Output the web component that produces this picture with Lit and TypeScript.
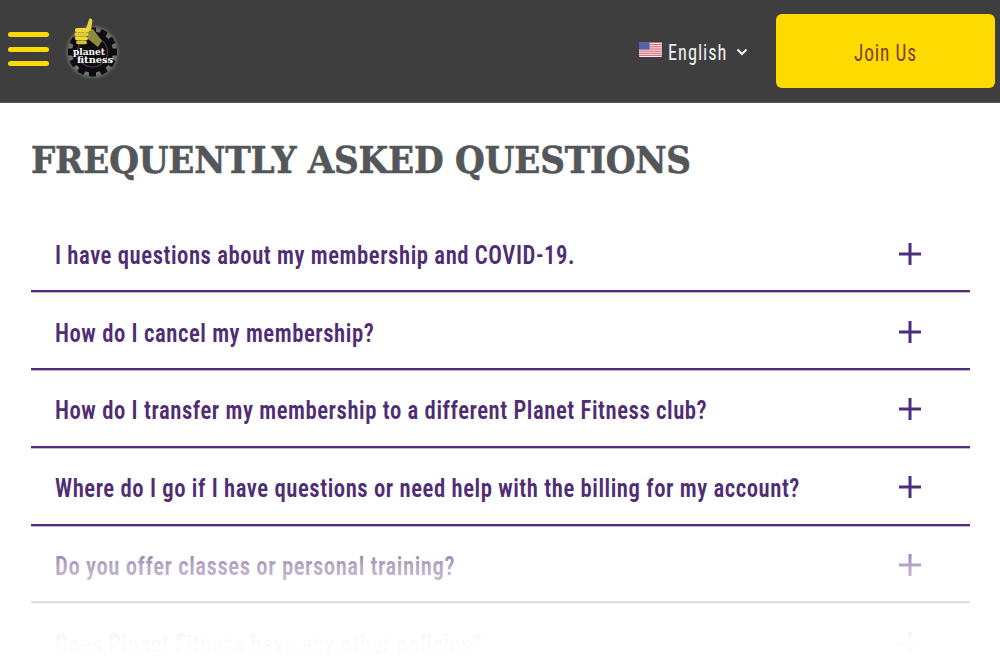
import { LitElement, html, css, svg } from "lit";
import { customElement } from "lit/decorators.js";

const QUESTIONS = [
  "I have questions about my membership and COVID-19.",
  "How do I cancel my membership?",
  "How do I transfer my membership to a different Planet Fitness club?",
  "Where do I go if I have questions or need help with the billing for my account?",
  "Do you offer classes or personal training?",
  "Does Planet Fitness have any other policies?",
];

const gearTeeth = Array.from({ length: 12 }, (_, i) => i * 30);

@customElement("app-root")
export class AppRoot extends LitElement {
  static styles = css`
    :host {
      display: block;
      position: relative;
      height: 100vh;
      overflow: hidden;
      background: #fff;
      font-family: Roboto, "Liberation Sans", sans-serif;
      font-stretch: 75%;
    }
    .top {
      height: 102px;
      background: #3e3e3e;
      border-bottom: 1px solid #5a5a5a;
      display: flex;
      align-items: center;
      padding: 0 5px 0 8px;
    }
    .burger {
      width: 41px;
      display: flex;
      flex-direction: column;
      gap: 9.5px;
      margin-top: -4px;
    }
    .burger span {
      height: 5px;
      border-radius: 3px;
      background: #fdd90a;
    }
    .logo {
      width: 60px;
      height: 80px;
      margin-left: 13px;
      margin-top: -18px;
      flex: none;
    }
    .spacer { flex: 1; }
    .lang {
      display: flex;
      align-items: center;
      color: #f2f2f2;
      font-size: 22px;
      letter-spacing: 1.2px;
      margin-right: 28px;
      padding-top: 2px;
    }
    .lang-text {
      width: 58px;
      white-space: nowrap;
      transform: scaleX(0.83);
      transform-origin: left center;
    }
    .flag { width: 23px; height: 15px; margin-right: 6px; margin-top: -5px; }
    .chev { width: 12px; height: 8px; margin-left: 10px; margin-top: -1px; }
    .join {
      width: 219px;
      height: 74px;
      margin-top: -1px;
      border-radius: 6px;
      background: #fedb00;
      color: #7d3f2b;
      display: flex;
      align-items: center;
      justify-content: center;
      font-size: 23px;
      letter-spacing: 1px;
    }
    .join span {
      width: 62px;
      margin: 5px 1px 0 0;
      white-space: nowrap;
      transform: scaleX(0.84);
      transform-origin: left center;
    }
    main { padding: 32px 30px 0 31px; }
    h1 {
      margin: 0 0 29.5px;
      font-family: "DejaVu Serif Condensed", "DejaVu Serif", serif;
      font-weight: 700;
      font-size: 38px;
      line-height: 50px;
      letter-spacing: -0.2px;
      color: #54575a;
      -webkit-text-stroke: 0.6px #54575a;
    }
    .row {
      height: 75.8px;
      border-bottom: 2px solid #4f2d7f;
      box-shadow: 0 1px 0 rgba(79, 45, 127, 0.35);
      display: flex;
      align-items: center;
      padding: 0 49px 0 24px;
      color: #4f2d74;
      font-size: 25px;
      font-weight: 650;
      letter-spacing: 0.6px;
    }
    .row span {
      flex: 1;
      white-space: nowrap;
      margin-top: 6px;
      transform: scaleX(0.908);
      transform-origin: left center;
    }
    .plus { width: 22px; height: 22px; margin-top: 3px; flex: none; }
    .fade {
      position: absolute;
      left: 0;
      right: 0;
      bottom: 0;
      height: 172px;
      background: linear-gradient(
        to bottom,
        rgba(255, 255, 255, 0) 0,
        rgba(255, 255, 255, 0) 26px,
        rgba(255, 255, 255, 0.58) 66px,
        rgba(255, 255, 255, 0.83) 102px,
        rgba(255, 255, 255, 0.98) 142px,
        #fff 172px
      );
      pointer-events: none;
    }
  `;

  private logo() {
    const serif = "'DejaVu Serif','Liberation Serif',serif";
    return html`<svg class="logo" viewBox="0 0 60 80" aria-hidden="true">
      <defs>
        <radialGradient id="halo">
          <stop offset="0.8" stop-color="#fff" stop-opacity="0.28" />
          <stop offset="1" stop-color="#fff" stop-opacity="0" />
        </radialGradient>
      </defs>
      <circle cx="30.5" cy="50" r="28" fill="url(#halo)" />
      <g fill="#0d0d0d">
        <circle cx="30.5" cy="50" r="20.5" />
        ${gearTeeth.map(
          (a) => svg`<rect x="27" y="25.5" width="7" height="8" rx="1" transform="rotate(${a} 30.5 50)" />`
        )}
      </g>
      <circle cx="30.5" cy="50" r="15" fill="none" stroke="#5b2a6e" stroke-width="1.2" />
      <path d="M25 28l6-1 9 12-4 6-10-8z" fill="#8d8a3a" />
      <path d="M22 31l4-10c.6-2 .5-4 2-4.500s2.500 1 2.300 3l-1.300 9z" fill="#e9d33c" />
      <rect x="13" y="26" width="14" height="4.200" rx="2" fill="#eed83e" />
      <rect x="12.500" y="30.300" width="14" height="4.200" rx="2" fill="#e3cd36" />
      <rect x="13" y="34.600" width="13" height="4" rx="2" fill="#eed83e" />
      <rect x="14" y="38.700" width="11" height="3.600" rx="1.800" fill="#d9c42f" />
      <text x="27" y="52.500" text-anchor="middle" textLength="32" lengthAdjust="spacingAndGlyphs" font-family="${serif}" font-weight="700" font-size="8.500" fill="#fff">planet</text>
      <text x="33" y="61" text-anchor="middle" textLength="36" lengthAdjust="spacingAndGlyphs" font-family="${serif}" font-weight="700" font-size="8.500" fill="#fff">fitness</text>
    </svg>`;
  }

  private flag() {
    const stripes = [0, 1, 2, 3, 4, 5, 6];
    return html`<svg class="flag" viewBox="0 0 23 15" aria-hidden="true">
      <rect width="23" height="15" rx="1" fill="#f7eef0" />
      ${stripes.map((i) => svg`<rect y="${i * 2.14}" width="23" height="1.07" fill="#d9616f" />`)}
      <rect width="10.5" height="7.5" fill="#5661a8" />
    </svg>`;
  }

  render() {
    return html`
      <header class="top">
        <div class="burger"><span></span><span></span><span></span></div>
        ${this.logo()}
        <div class="spacer"></div>
        <div class="lang">
          ${this.flag()}<span class="lang-text">English</span>
          <svg class="chev" viewBox="0 0 12 8" aria-hidden="true">
            <path d="M1.5 1.5 6 6l4.5-4.5" fill="none" stroke="#f2f2f2" stroke-width="2" />
          </svg>
        </div>
        <div class="join"><span>Join Us</span></div>
      </header>
      <main>
        <h1>FREQUENTLY ASKED QUESTIONS</h1>
        ${QUESTIONS.map(
          (q) => html`<div class="row">
            <span>${q}</span>
            <svg class="plus" viewBox="0 0 22 22" aria-hidden="true">
              <path d="M0 11h22M11 0v22" stroke="#4f2d7f" stroke-width="3" fill="none" />
            </svg>
          </div>`
        )}
      </main>
      <div class="fade"></div>
    `;
  }
}
